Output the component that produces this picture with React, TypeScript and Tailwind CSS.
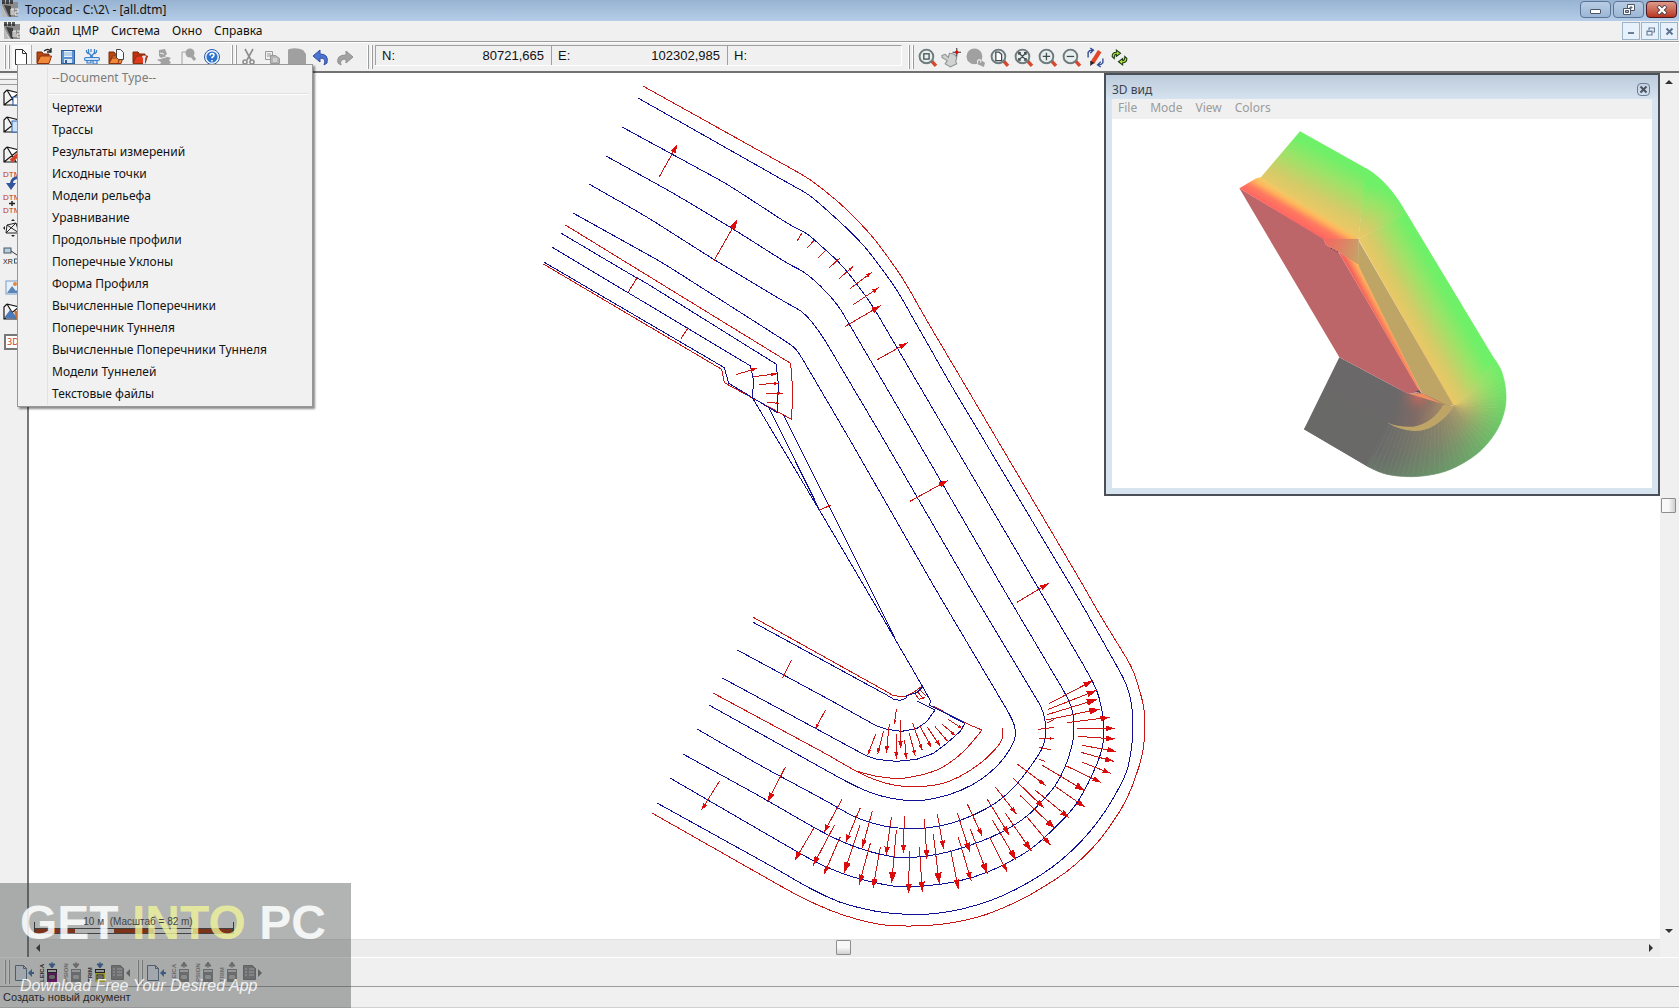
import type { ReactNode } from "react";
import clsx from "clsx";

type Arrow = [number, number, number, number, number];
type Pt = [number, number];

const RED = "#cc1616";
const BLUE = "#101096";

const MENU = ["Файл", "ЦМР", "Система", "Окно", "Справка"];

const DOC_TYPES = [
  "Чертежи",
  "Трассы",
  "Результаты измерений",
  "Исходные точки",
  "Модели рельефа",
  "Уравнивание",
  "Продольные профили",
  "Поперечные Уклоны",
  "Форма Профиля",
  "Вычисленные Поперечники",
  "Поперечник Туннеля",
  "Вычисленные Поперечники Туннеля",
  "Модели Туннелей",
  "Текстовые файлы",
];

// Contours in window coordinates
const BLUE_CONTOURS = [
  "638,98 797,188 808,194 820,204 838,220 857,238 870,253 885,273 897,290 930,348 948,380 1080,601 1118,668 1127,685 1131,700 1133,718 1133,738 1130,758 1127,772 1117,792 1105,812 1090,832 1073,850 1052,868 1028,883 1003,896 978,905 950,912 920,915 900,914 877,912 840,903 807,887 780,871 657,803",
  "622,127 727,184 793,227 807,233 820,245 837,260 850,275 865,295 875,310 930,404 1080,659 1089,675 1097,690 1101,705 1104,722 1104,740 1100,757 1093,773 1084,792 1073,809 1055,828 1033,848 1015,859 987,873 957,882 927,886 900,887 893,886 870,882 840,873 815,862 763,832 670,778",
  "606,156 673,193 730,227 790,265 803,271 820,285 838,305 848,322 917,440 1004,590 1065,693 1072,707 1074,722 1074,737 1070,753 1065,768 1055,787 1043,800 1027,817 1003,832 980,842 950,852 923,857 900,858 893,857 870,852 847,844 830,836 813,827 763,798 683,754",
  "589,184 647,217 713,259 790,305 802,311 813,323 823,337 884,440 971,590 1045,713 1046,737 1042,750 1033,763 1023,777 1007,795 987,809 960,821 937,827 915,829 893,828 870,823 850,815 830,803 763,767 697,729",
  "573,213 663,263 793,346 799,353 850,440 936,590 1013,720 1016,732 1014,743 1003,760 990,773 973,785 950,795 927,800 913,801 893,799 870,793 847,782 709,705",
];

const RED_CONTOURS = [
  "643,86 810,179 830,195 843,206 863,226 877,242 895,267 905,282 930,326 962,380 1080,580 1100,615 1132,667 1138,685 1143,702 1145,718 1145,737 1142,757 1137,773 1127,800 1113,822 1100,840 1085,856 1067,872 1045,886 1025,898 1003,908 983,916 953,923 925,926 892,926 870,923 842,915 817,905 793,893 770,880 652,813",
  "713,693 830,756 857,772 877,781 897,786 915,787 940,785 960,777 980,764 993,752 1003,740 1002,728",
  "857,771 873,776 897,779 913,777 937,771 957,758 970,745 982,730",
  "982,730 965,723 933,706",
];

// The detail groups below are digitised at three units per pixel
const NORTH = {
  red: ["106,465 782,880 788,960 785,1048 590,942 583,938 575,898 40,582"],
  blue: [
    "94,490 300,612 350,640 738,882 745,940 742,1028",
    "67,532 662,888 670,930 668,985",
    "43,577 583,893 596,940 742,1028",
  ],
  arrows: [
    [388, 320, 442, 224, 25], [552, 572, 622, 449, 30], [802, 512, 815, 490, 0], [833, 533, 852, 511, 0],
    [865, 563, 889, 539, 8], [897, 594, 929, 565, 12], [927, 626, 970, 589, 15], [960, 656, 1025, 607, 18],
    [970, 704, 1046, 653, 20], [946, 769, 1052, 707, 28], [1042, 869, 1133, 818, 26], [295, 666, 322, 622, 6],
    [452, 808, 474, 773, 8], [618, 914, 680, 895, 18], [670, 920, 742, 911, 18], [687, 943, 748, 940, 16],
    [708, 970, 758, 970, 16], [711, 997, 748, 1000, 10],
  ] as Arrow[],
};

const MIDDLE = {
  red: [],
  blue: ["38,55 238,390 400,665 545,915", "85,80 244,400 435,725 465,775", "130,105 266,376 465,775"],
  arrows: [[510, 364, 624, 301, 28], [831, 667, 926, 610, 26], [238, 390, 272, 376, 8]] as Arrow[],
};

const SOUTH = {
  red: ["370,82 770,305 790,317 825,320 850,308 878,287", "867,298 888,318", "862,305 880,326", "855,312 868,328 886,322"],
  blue: [
    "368,96 770,315 790,327 810,331 828,325 830,317 860,308 878,290",
    "322,180 600,330 740,408 770,418 815,424 860,416 890,395 915,360 860,332",
    "277,264 710,498 740,508 800,514 860,508 910,490 950,460 990,425 1005,400",
    "875,285 890,312 903,335 897,345 1005,400",
  ],
  arrows: [
    [484, 211, 458, 263, 10], [586, 361, 556, 416, 14], [466, 531, 413, 635, 28], [268, 574, 214, 661, 22],
    [637, 626, 582, 727, 24], [691, 653, 647, 758, 24], [727, 663, 697, 773, 24], [784, 682, 768, 796, 26],
    [799, 720, 785, 880, 34], [552, 714, 494, 811, 28], [613, 706, 549, 827, 28], [631, 740, 582, 853, 26],
    [690, 705, 642, 850, 34], [721, 760, 687, 884, 30], [751, 771, 729, 895, 28], [799, 358, 793, 403, 12],
    [778, 401, 769, 488, 20], [811, 391, 812, 475, 22], [760, 424, 743, 492, 18], [737, 433, 713, 495, 16],
    [799, 433, 799, 506, 20], [824, 449, 829, 508, 18], [838, 430, 856, 498, 18], [848, 400, 877, 481, 18],
    [870, 408, 904, 472, 18], [892, 411, 931, 469, 18], [915, 410, 953, 454, 14], [937, 403, 978, 438, 16],
    [955, 388, 998, 417, 14],
  ] as Arrow[],
};

const BEND = {
  red: [],
  blue: [],
  arrows: [
    [447, 341, 578, 272, 28], [445, 358, 590, 301, 30], [441, 374, 592, 328, 32], [439, 390, 600, 357, 32],
    [500, 398, 629, 382, 28], [530, 415, 645, 415, 28], [533, 439, 645, 447, 26], [546, 466, 648, 484, 26],
    [543, 487, 641, 514, 26], [547, 517, 632, 550, 24], [497, 527, 602, 577, 25], [427, 526, 556, 603, 32],
    [464, 588, 556, 652, 27], [405, 600, 508, 684, 28], [360, 616, 465, 716, 30], [382, 682, 452, 766, 26],
    [340, 565, 433, 655, 28], [351, 522, 437, 586, 22], [286, 591, 349, 672, 22], [262, 628, 328, 736, 28],
    [316, 670, 394, 783, 30], [202, 642, 247, 739, 24], [172, 669, 209, 786, 28], [277, 690, 349, 811, 32],
    [211, 717, 262, 852, 32], [268, 740, 322, 847, 26], [175, 742, 214, 874, 28], [152, 779, 175, 897, 28],
    [112, 672, 131, 778, 26], [100, 733, 118, 882, 34], [73, 687, 81, 807, 28], [58, 772, 67, 905, 30],
    [13, 678, 10, 790, 24], [28, 784, 26, 910, 28], [414, 418, 462, 412, 8], [417, 445, 462, 446, 12],
    [417, 472, 452, 479, 6], [417, 508, 435, 514, 0], [442, 398, 462, 388, 0],
  ] as Arrow[],
};

const mix = (a: number, b: number, t: number) => a + (b - a) * t;
const mixPt = (a: Pt, b: Pt, t: number): Pt => [mix(a[0], b[0], t), mix(a[1], b[1], t)];
const dist = (a: Pt, b: Pt) => Math.hypot(a[0] - b[0], a[1] - b[1]);

// Polyline with its corners rounded off, at most 14px along each leg
function roundedPath(points: string) {
  const pts = points.split(" ").map((p) => p.split(",").map(Number) as Pt);
  let d = `M${pts[0]}`;
  for (let i = 1; i < pts.length - 1; i++) {
    const [a, p, b] = [pts[i - 1], pts[i], pts[i + 1]];
    const from = mixPt(p, a, Math.min(0.5, 14 / dist(p, a)));
    const to = mixPt(p, b, Math.min(0.5, 14 / dist(p, b)));
    d += `L${from}Q${p} ${to}`;
  }
  return `${d}L${pts[pts.length - 1]}`;
}

function SlopeArrow({ a }: { a: Arrow }) {
  const [x1, y1, x2, y2, head] = a;
  const len = Math.hypot(x2 - x1, y2 - y1);
  const ux = (x2 - x1) / len;
  const uy = (y2 - y1) / len;
  const bx = x2 - ux * head;
  const by = y2 - uy * head;
  const w = head * 0.32;
  return (
    <>
      <line x1={x1} y1={y1} x2={x2} y2={y2} stroke={RED} vectorEffect="non-scaling-stroke" />
      {head > 0 && (
        <polygon points={`${x2},${y2} ${bx - uy * w},${by + ux * w} ${bx + uy * w},${by - ux * w}`} fill="#dc0c0c" />
      )}
    </>
  );
}

function Detail({ x, y, data }: { x: number; y: number; data: { red: string[]; blue: string[]; arrows: Arrow[] } }) {
  return (
    <g transform={`translate(${x} ${y}) scale(${1 / 3})`}>
      {data.red.map((p) => (
        <polyline key={p} points={p} stroke={RED} vectorEffect="non-scaling-stroke" />
      ))}
      {data.blue.map((p) => (
        <polyline key={p} points={p} stroke={BLUE} vectorEffect="non-scaling-stroke" />
      ))}
      {data.arrows.map((a) => (
        <SlopeArrow key={a.join()} a={a} />
      ))}
    </g>
  );
}

function TerrainPlan() {
  return (
    <svg className="block h-full w-full" role="img" aria-label="all.dtm">
      <g transform="translate(-29 -73)" fill="none" strokeWidth={1} shapeRendering="crispEdges">
        {BLUE_CONTOURS.map((p) => (
          <path key={p} d={roundedPath(p)} stroke={BLUE} />
        ))}
        {RED_CONTOURS.map((p) => (
          <path key={p} d={roundedPath(p)} stroke={RED} />
        ))}
        <Detail x={530} y={70} data={NORTH} />
        <Detail x={740} y={380} data={MIDDLE} />
        <Detail x={630} y={590} data={SOUTH} />
        <Detail x={900} y={590} data={BEND} />
      </g>
    </svg>
  );
}

// Bend of the outer slope: crest and toe points with the amount of shade at each
const FAN: { inner: Pt; outer: Pt; shade: number }[] = [
  { inner: [1062, 1008], outer: [1185, 869], shade: 0 },
  { inner: [1062, 1008], outer: [1205, 905], shade: 0.02 },
  { inner: [1062, 1008], outer: [1217, 960], shade: 0.1 },
  { inner: [1062, 1008], outer: [1215, 1015], shade: 0.22 },
  { inner: [1062, 1008], outer: [1194, 1075], shade: 0.36 },
  { inner: [1060, 1010], outer: [1152, 1132], shade: 0.5 },
  { inner: [1046, 1030], outer: [1100, 1173], shade: 0.62 },
  { inner: [1024, 1050], outer: [1036, 1204], shade: 0.72 },
  { inner: [986, 1072], outer: [968, 1218], shade: 0.8 },
  { inner: [945, 1082], outer: [905, 1219], shade: 0.88 },
  { inner: [900, 1075], outer: [850, 1210], shade: 0.95 },
  { inner: [862, 1058], outer: [800, 1188], shade: 1 },
];

const shaded = (rgb: number[], s: number) => `rgb(${rgb.map((c) => Math.round(mix(c, 105, s))).join(",")})`;

// Catmull-Rom through the toe points keeps the rim round
function rim(i: number, t: number): Pt {
  const at = (n: number) => FAN[Math.max(0, Math.min(FAN.length - 1, n))].outer;
  const [p0, p1, p2, p3] = [at(i - 1), at(i), at(i + 1), at(i + 2)];
  const axis = (k: 0 | 1) =>
    0.5 *
    (2 * p1[k] +
      (p2[k] - p0[k]) * t +
      (2 * p0[k] - 5 * p1[k] + 4 * p2[k] - p3[k]) * t * t +
      (3 * p1[k] - p0[k] - 3 * p2[k] + p3[k]) * t * t * t);
  return [axis(0), axis(1)];
}

const STEPS = 4;
const fanQuads = FAN.slice(0, -1).flatMap((f, i) => {
  const g = FAN[i + 1];
  return Array.from({ length: STEPS }, (_, k) => {
    const t0 = k / STEPS;
    const t1 = (k + 1) / STEPS;
    return {
      id: `fan${i}-${k}`,
      a: mixPt(f.inner, g.inner, t0),
      b: rim(i, t0),
      c: rim(i, t1),
      d: mixPt(f.inner, g.inner, t1),
      shade: mix(f.shade, g.shade, t0),
    };
  });
});

const slopeStops = (
  <>
    <stop offset="0" stopColor="#ecc766" />
    <stop offset=".25" stopColor="#d2cc68" />
    <stop offset=".6" stopColor="#9ce368" />
    <stop offset=".9" stopColor="#6ef068" />
  </>
);

function TerrainModel() {
  return (
    <svg className="block h-full w-full" role="img" aria-label="3D">
      <defs>
        <linearGradient id="slopeTop" gradientUnits="userSpaceOnUse" x1="627" y1="415" x2="719" y2="250">{slopeStops}</linearGradient>
        <linearGradient id="slopeRight" gradientUnits="userSpaceOnUse" x1="775" y1="510" x2="919" y2="427">{slopeStops}</linearGradient>
        <radialGradient id="slopeCorner" gradientUnits="userSpaceOnUse" cx="775" cy="505" r="185">{slopeStops}</radialGradient>
        {fanQuads.map((q) => (
          <linearGradient key={q.id} id={q.id} gradientUnits="userSpaceOnUse" x1={q.a[0]} y1={q.a[1]} x2={q.b[0]} y2={q.b[1]}>
            <stop offset="0" stopColor={shaded([236, 199, 102], q.shade)} />
            <stop offset=".3" stopColor={shaded([200, 205, 104], q.shade)} />
            <stop offset=".65" stopColor={shaded([146, 228, 104], q.shade)} />
            <stop offset="1" stopColor={shaded([108, 240, 104], q.shade * 0.93)} />
          </linearGradient>
        ))}
        <linearGradient id="edge" gradientUnits="userSpaceOnUse" x1="418" y1="355" x2="447" y2="306">
          <stop offset="0" stopColor="#ff6662" />
          <stop offset=".4" stopColor="#ff7a60" />
          <stop offset=".75" stopColor="#ffb45c" />
          <stop offset="1" stopColor="#f2c864" />
        </linearGradient>
        <linearGradient id="notch" gradientUnits="userSpaceOnUse" x1="672" y1="510" x2="776" y2="540">
          <stop offset="0" stopColor="#f46862" />
          <stop offset=".5" stopColor="#e08064" />
          <stop offset="1" stopColor="#c8a066" />
        </linearGradient>
        <linearGradient id="sliver" gradientUnits="userSpaceOnUse" x1="824" y1="732" x2="852" y2="717">
          <stop offset="0" stopColor="#f4665c" />
          <stop offset=".6" stopColor="#ffa85c" />
          <stop offset="1" stopColor="#ffc860" />
        </linearGradient>
        <linearGradient id="bowl" gradientUnits="userSpaceOnUse" x1="880" y1="1000" x2="1035" y2="1020">
          <stop offset="0" stopColor="#6a6868" />
          <stop offset=".45" stopColor="#7e6a66" />
          <stop offset="1" stopColor="#a88c66" />
        </linearGradient>
        <radialGradient id="ember" gradientUnits="userSpaceOnUse" cx="955" cy="978" r="60">
          <stop offset="0" stopColor="#d8685e" stopOpacity=".8" />
          <stop offset="1" stopColor="#806860" stopOpacity="0" />
        </radialGradient>
      </defs>
      <g transform="translate(-12 -49) scale(.333333)">
        <polygon points="480,325 600,184 790,290 800,296 775,510" fill="url(#slopeTop)" />
        <path d="M775 508L798 294Q868 335 921 432Z" fill="url(#slopeCorner)" />
        <polygon points="775,508 920,430 1185,869 1186,872 1062,1010" fill="url(#slopeRight)" />
        {fanQuads.map((q) => (
          <polygon key={q.id} points={[q.a, q.b, q.c, q.d].join(" ")} fill={`url(#${q.id})`} stroke={`url(#${q.id})`} strokeWidth="2" />
        ))}
        <path d="M718 862L612 1078L800 1188L864 1058L925 972Z" fill="#6a6868" />
        <path d="M680 965L612 1078L800 1188L862 1058Z" fill="#696a67" />
        <path d="M860 940L862 1058Q900 1076 945 1080Q1010 1075 1060 1010L965 968L925 972Z" fill="url(#bowl)" />
        <path d="M860 940L862 1058Q900 1076 945 1080Q1010 1075 1060 1010L965 968L925 972Z" fill="url(#ember)" />
        <polygon points="418,355 670,505 678,524 715,545 960,965 925,972 718,862" fill="#bd6669" />
        <polygon points="418,355 466,326 480,322 775,506 775,508 670,507" fill="url(#edge)" />
        <polygon points="670,506 776,507 777,588 715,545 678,524" fill="url(#notch)" />
        <polygon points="715,545 777,585 966,970 955,958" fill="url(#sliver)" />
        <polygon points="775,510 1062,1008 1035,1003 965,968 777,590" fill="#bea566" />
        <polygon points="930,972 966,970 1030,1003" fill="#f09060" />
        <polygon points="945,966 957,960 964,970" fill="#565060" />
        <path d="M862 1058Q895 1072 940 1070Q1000 1058 1030 1004L1062 1008Q1010 1085 940 1083Q895 1078 862 1058Z" fill="#bea566" />
        <path d="M692 534l22 12" stroke="#803030" strokeWidth="3" strokeDasharray="6 4" />
      </g>
    </svg>
  );
}

function Icon({ children, size = "h-[18px] w-[18px]" }: { children: ReactNode; size?: string }) {
  return (
    <svg viewBox="0 0 18 18" className={clsx("shrink-0 overflow-visible", size)} fill="none" aria-hidden="true">
      {children}
    </svg>
  );
}

function ToolButton({ label, children, disabled }: { label: string; children: ReactNode; disabled?: boolean }) {
  return (
    <button type="button" aria-label={label} disabled={disabled} className="flex h-6 w-6 shrink-0 items-center justify-center">
      {children}
    </button>
  );
}

function Grip() {
  return (
    <span className="flex h-6 shrink-0 gap-[2px]">
      <span className="w-[2px] border-r border-[#9c9c9c] bg-white" />
      <span className="w-[2px] border-r border-[#9c9c9c] bg-white" />
    </span>
  );
}

const Folder = ({ red }: { red?: boolean }) => (
  <>
    <path d="M2 15V4h5l1.500 2H14v3" fill={red ? "#c03010" : "#b84812"} stroke="#7c2808" />
    <path d="M2 15.500L5.500 8H16.500L14 15.500Z" fill={red ? "#e23a1c" : "#f08a38"} stroke="#8c3010" />
  </>
);

const fileTools: { label: string; icon: ReactNode; disabled?: boolean }[] = [
  { label: "Открыть", icon: <><Folder /><path d="M9 3q4-3 6.500 0M16 0v4h-4" stroke="#222" strokeWidth="1.300" /></> },
  {
    label: "Сохранить",
    icon: (
      <>
        <rect x="2.500" y="2.500" width="13" height="13" fill="#5d92cf" stroke="#2d5f9d" />
        <rect x="5" y="3" width="8" height="6" fill="#e6f2fc" />
        <path d="M5 5h8M5 7h8" stroke="#8db4dc" />
        <rect x="5" y="11" width="8" height="4" fill="#dbe7f2" />
        <rect x="6" y="12" width="2" height="3" fill="#2d5f9d" />
      </>
    ),
  },
  {
    label: "Инструменты",
    icon: (
      <g stroke="#3c7fca" strokeWidth="1.200" fill="#cfe3f8">
        <path d="M5.500 1v4l5 5M11.500 1v4l-5 5M3.500 2v2l2 2M8 1v3M13.500 2v2l-2 2" />
        <rect x="1.500" y="9.500" width="15" height="3" rx="1.500" />
        <path d="M4 13v2h4v-2M10 13v3h4v-3" />
      </g>
    ),
  },
  { label: "Открыть документ", icon: <><Folder /><path d="M9.500 1.500h4l3 3v7h-7Z" fill="#f7fafc" stroke="#444" /><path d="M2 15.500L5 10h5l2 2-1 3.500Z" fill="#f08a38" stroke="#8c3010" /></> },
  { label: "Настройка папки", icon: <><Folder red /><path d="M13 9v7M11.500 8l1.500 1.500L14.500 8" stroke="#dfe6ee" strokeWidth="2" /></> },
  {
    label: "Печать",
    disabled: true,
    icon: <g fill="#a2a2a2"><path d="M4 2l6-1 2 5-2 2 6 2-2 2 2 3-4 2H5l1-3-4-2 4-2-2-2Z" /><path d="M4 11l10-3M5 5l4 1" stroke="#f0f0f0" /></g>,
  },
  {
    label: "Просмотр",
    disabled: true,
    icon: <><path d="M3 17V4h6" stroke="#a2a2a2" /><circle cx="11" cy="5" r="4.500" fill="#a2a2a2" /><path d="M13 8l3 4" stroke="#a2a2a2" strokeWidth="3" /></>,
  },
  {
    label: "Помощь",
    icon: (
      <>
        <circle cx="9" cy="9" r="7.500" fill="#eaf3fd" stroke="#2a5ba8" />
        <circle cx="9" cy="9" r="5.500" fill="#2d72c8" />
        <path d="M7 7.500q0-2 2-2t2 1.700q0 1-2 2.300v.8M9 12v1.400" stroke="#fff" strokeWidth="1.500" />
      </>
    ),
  },
];

const editTools: { label: string; icon: ReactNode; disabled?: boolean }[] = [
  { label: "Вырезать", disabled: true, icon: <g stroke="#8e8e8e" strokeWidth="1.600"><path d="M5 1l6 11M13 1L7 12" /><circle cx="5" cy="14" r="2" /><circle cx="12" cy="14" r="2" /></g> },
  { label: "Копировать", disabled: true, icon: <g stroke="#9a9a9a"><path d="M1.500 3.500h7v8h-7zM3 6h4M3 8h4" /><path d="M6.500 7.500h5l4 3v5h-9z" fill="#b4b4b4" /><path d="M9 11h4M9 13h4" stroke="#eee" /></g> },
  { label: "Вставить", disabled: true, icon: <path d="M1 1q8-2 14 1l3 4v12H0V2Z" fill="#a0a0a0" /> },
  { label: "Отменить", icon: <path d="M8 2v4q9 0 7 9l-3 2q3-7-4-7v4L1 8Z" fill="#4e74d2" stroke="#2f4ea4" /> },
  { label: "Повторить", disabled: true, icon: <path d="M10 3v4q-10 0-8 8l3 2q-2-6 5-6v4l7-6Z" fill="#a2a2a2" stroke="#8f8f8f" /> },
];

function Lens({ children }: { children?: ReactNode }) {
  return (
    <>
      <path d="M13 12.500l4 4.500" stroke="#d4482c" strokeWidth="3.200" />
      <circle cx="8" cy="8" r="6.500" fill="#e6efee" stroke="#6f7a7c" strokeWidth="1.800" />
      <g stroke="#434b4e" strokeWidth="1.200">{children}</g>
    </>
  );
}

const viewTools: { label: string; icon: ReactNode; disabled?: boolean }[] = [
  { label: "Окно увеличения", icon: <Lens><rect x="5.500" y="5.500" width="5" height="5" /></Lens> },
  { label: "Панорама", icon: <><path d="M0 7l3-1 3 3 1-4 5 1 2 3-1 4 1 2-6 3-5-3 2-3-5-3Z" fill="#cfd2d1" stroke="#8c9290" /><path d="M14 0v8M10 4h8" stroke="#333" /><path d="M12.500 4h3M14 2.500v3" stroke="#e00" strokeWidth="2" /></> },
  { label: "Предыдущий вид", disabled: true, icon: <><circle cx="8" cy="8" r="7.500" fill="#a0a0a0" /><path d="M12 10l6 4-1 4-7-3Z" fill="#a0a0a0" /><path d="M11 15v-3q2-2 3 0v2" stroke="#eee" /></> },
  { label: "Лист", icon: <Lens><path d="M5.500 4h3l2.500 2v6h-5.500z" fill="#fff" /></Lens> },
  { label: "Показать всё", icon: <Lens><path d="M4.500 6.500v-2h2M9.500 4.500h2v2M11.500 9.500v2h-2M6.500 11.500h-2v-2M5 5l6 6M11 5l-6 6" /></Lens> },
  { label: "Увеличить", icon: <Lens><path d="M4.500 8h7M8 4.500v7" /></Lens> },
  { label: "Уменьшить", icon: <Lens><path d="M4.500 8h7" /></Lens> },
  { label: "Перерисовать", icon: <><path d="M6 14L13 3" stroke="#e0482a" strokeWidth="4" /><path d="M4 17l0-5 4 2Z" fill="#222" /><path d="M2 9V4q1-2 4-2M4 0l3 2-3 3M16 10v4q-1 2-4 2M14 13l-3 3 3 2" stroke="#2e4b94" strokeWidth="1.300" /></> },
  { label: "Обновить", icon: <g stroke="#1a3a12"><path d="M4 10L2 8q0-4 4-4V2l4 3-4 3V6q-2 0-2 4Z" fill="#a6dc3c" /><path d="M14 8l2 2q0 4-4 4v2l-4-3 4-3v2q2 0 2-4Z" fill="#c6e83c" /></g> },
];

const mesh = <path d="M4 1l-3 3v12h12M1 16L16 4M4 1l12 3v12H1M4 1l9 15" stroke="#151515" strokeWidth="1.200" fill="#fff" />;
const tiny = { fontFamily: "Liberation Sans", fontSize: 8 };

const sideTools: { label: string; icon: ReactNode; box: string }[] = [
  { label: "Создать ЦМР", box: "h-[25px]", icon: <>{mesh}<rect x="10" y="8" width="8" height="8" fill="#fff" stroke="#1d55a8" /></> },
  { label: "Открыть ЦМР", box: "h-[29px]", icon: <>{mesh}<rect x="9" y="5" width="9" height="11" fill="#cfe2f6" stroke="#2d66b6" /></> },
  { label: "Редактировать", box: "h-[31px]", icon: <>{mesh}<path d="M8 15L17 7" stroke="#d4442a" strokeWidth="4" /></> },
  { label: "Загрузить DTM", box: "h-[21px]", icon: <><text x="0" y="5" fill="#b83018" style={tiny}>DTM</text><path d="M16 4q-8 0-9 7H3l5 7 5-7h-3q0-4 6-4Z" fill="#33559c" /></> },
  { label: "Сложить DTM", box: "h-[25px]", icon: <><text x="0" y="5" fill="#b83018" style={tiny}>DTM</text><path d="M9 6v5M6 8.500h6" stroke="#222" strokeWidth="1.500" /><text x="0" y="18" fill="#b83018" style={tiny}>DTM</text></> },
  { label: "Переместить", box: "h-[23px]", icon: <><path d="M4 6l9-2 3 10-13 0ZM4 6l12 8M13 4L3 14" stroke="#222" /><path d="M8 2l2-2 2 2ZM8 16l2 2 2-2ZM2 7L0 9l2 2Z" fill="#222" /></> },
  { label: "Ссылки", box: "h-[33px]", icon: <><rect x="1" y="1" width="7" height="5" fill="#b9cfdb" stroke="#456" /><path d="M8 4l6 4" stroke="#333" /><text x="0" y="17" fill="#222" style={{ fontFamily: "Liberation Sans", fontSize: 7 }}>XR</text><rect x="11.500" y="12" width="5" height="4" stroke="#456" /></> },
  { label: "Изображение", box: "h-[30px]", icon: <><rect x="3" y="3" width="14" height="13" fill="#e8f1fb" stroke="#7b9cc4" /><path d="M4 15l5-7 4 5 2-2 2 4Z" fill="#5c86b8" /><circle cx="12" cy="6" r="2" fill="#e08a3c" /></> },
  { label: "Модель", box: "h-5", icon: <>{mesh}<path d="M1 15l6-8 9 9Z" fill="#4a78b8" /><path d="M11 8h6v8h-4Z" fill="#c2703c" /></> },
];

function Device({ name, body, ink, up }: { name: string; body: string; ink: string; up?: boolean }) {
  const arrow = ink === "#858687" ? ink : "#3666a8";
  return (
    <svg viewBox="0 0 20 20" className="h-5 w-5 overflow-visible" fill="none" aria-hidden="true">
      <text x="0" y="0" transform="translate(6 20) rotate(-90)" fill={ink} style={{ fontFamily: "Liberation Sans", fontSize: 6, fontWeight: 700 }}>
        {name}
      </text>
      <path d={up ? "M14 6V3M11 4l3-4 3 4Z" : "M14 0v3M11 2l3 4 3-4Z"} fill={arrow} stroke={arrow} />
      <rect x="9.500" y="7.500" width="9" height="3" fill="#cfcfcf" stroke={ink} />
      <rect x="9" y="11" width="10" height="9" fill={body} />
      <rect x="11" y="13" width="6" height="4" fill="#eee" stroke={ink} />
      <path d="M12 15h4" stroke={ink} />
    </svg>
  );
}

function DocArrow() {
  return (
    <svg viewBox="0 0 20 20" className="h-5 w-5" fill="none" aria-hidden="true">
      <path d="M1.500 3.500h8l3 3v12h-11Z" fill="#e3ecf4" stroke="#5d7086" />
      <path d="M9.500 3.500v3h3" stroke="#5d7086" />
      <path d="M14 11l4-4v3h2v2h-2v3Z" fill="#3d6fae" />
    </svg>
  );
}

function ListArrow({ right }: { right?: boolean }) {
  return (
    <svg viewBox="0 0 20 20" className="h-5 w-5" fill="none" aria-hidden="true">
      <path d="M1.500 3.500h9l3 3v11h-12Z" fill="#8a8b8c" stroke="#76777a" />
      <path d="M3 7h2M7 7h5M3 10h2M7 10h5M3 13h2M7 13h5" stroke="#d8d8d8" />
      <path d={right ? "M16 7l4 4-4 4Z" : "M20 7l-4 4 4 4Z"} fill="#76777a" />
    </svg>
  );
}

function DocumentTypeMenu() {
  return (
    <div
      role="menu"
      className="absolute top-[19px] left-[5px] z-30 w-[296px] border border-[#979797] bg-[#f1f1f1] pt-[2px] pb-px text-[12px] shadow-[2px_2px_2px_rgba(0,0,0,0.45)]"
    >
      <div className="ml-[29px] border-l border-[#e2e2e2]">
        <div className="flex h-[22px] items-center pl-1 text-[#7b7b7b]">--Document Type--</div>
        <div className="mt-1 mr-1 mb-[2px] border-t border-[#e0e0e0] bg-white pt-px" />
        {DOC_TYPES.map((t) => (
          <button key={t} type="button" role="menuitem" className="flex h-[22px] w-full items-center pl-1 text-left">
            {t}
          </button>
        ))}
      </div>
    </div>
  );
}

function View3D() {
  return (
    <section className="absolute top-0 right-0 flex h-[423px] w-[556px] flex-col border-2 border-[#4a4f58] bg-[#d7e3ef] px-[6px] pb-[6px]">
      <header className="-mx-[6px] flex h-6 items-end justify-between bg-gradient-to-b from-[#bccbdb] to-[#d5e2ef] px-[6px] text-[12px] text-[#3d444c]">
        <h2>3D вид</h2>
        <button type="button" aria-label="Закрыть 3D вид" className="mr-[2px] mb-[3px] flex h-[13px] w-[13px] items-center justify-center rounded-sm border border-[#6b7b94]">
          <svg viewBox="0 0 9 9" className="h-[9px] w-[9px]" aria-hidden="true"><path d="M1.500 1.500l6 6M7.500 1.500l-6 6" stroke="#4a5260" strokeWidth="2" /></svg>
        </button>
      </header>
      <nav className="flex h-5 shrink-0 items-center gap-[13px] bg-[#f0f0f0] px-[6px] pb-[2px] text-[12px] text-[#9b9b9b]">
        <button type="button">File</button>
        <button type="button">Mode</button>
        <button type="button">View</button>
        <button type="button">Colors</button>
      </nav>
      <div className="min-h-0 flex-1 bg-white">
        <TerrainModel />
      </div>
    </section>
  );
}

function ScaleBar() {
  return (
    <div className="absolute bottom-[5px] left-[5px] w-[200px] font-['Liberation_Sans',Arial,sans-serif]">
      <div className="relative z-50 pl-2 text-center text-[10px] leading-[11px] whitespace-pre text-[#444]">10 м  (Масштаб = 82 m)</div>
      <div className="-mt-[5px] flex h-3 items-end border-x border-[#333]">
        <div className="flex h-[6px] w-full border border-[#444]">
          <span className="flex-1 bg-[#a52a00]" />
          <span className="flex-1 bg-white" />
          <span className="flex-1 bg-[#a52a00]" />
          <span className="flex-1 bg-white" />
          <span className="flex-1 bg-[#a52a00]" />
        </div>
      </div>
    </div>
  );
}

function Readout({ id, name, value, wide }: { id: string; name: string; value: string; wide?: boolean }) {
  return (
    <div className={clsx("flex h-5 items-center justify-between border-t border-l border-[#a0a0a0] pr-[7px] pl-[6px]", wide ? "w-[175px] border-r border-r-white" : "w-[176px]")}>
      <label htmlFor={id}>{name}</label>
      <output id={id}>{value}</output>
    </div>
  );
}

function Logo() {
  return (
    <svg viewBox="0 0 18 18" className="h-[18px] w-[18px] shrink-0" aria-hidden="true">
      <path d="M1 2h16v15H7L1 6Z" fill="#8c8c8c" />
      <path d="M3 5l5 11 2 1V6Z" fill="#3e3e3e" />
      <path d="M1 1h12M1 3h12" stroke="#222" strokeWidth="1.500" strokeDasharray="3 1" />
      <path d="M10 9v6M12 9v6M10 9h3M14 9h3v3h-3v3h3" stroke="#f2f2f2" fill="none" />
      <path d="M1 5l5 12H1Z" fill="#b9b9b9" />
    </svg>
  );
}

const frameButton = "flex h-[17px] w-[31px] items-center justify-center rounded-sm border border-[#5c7596] bg-gradient-to-b from-[#b9cde4] to-[#9cb7d6]";
const mdiButton = "flex h-[18px] w-[18px] items-center justify-center border border-[#9cb4c8] bg-[#e6f1fb]";

export default function App() {
  return (
    <div className="flex h-screen flex-col overflow-hidden bg-[#f0f0f0] font-['Noto_Sans','Open_Sans',sans-serif] text-[12px] text-[#111]">
      <header className="flex h-[21px] shrink-0 items-start bg-gradient-to-b from-[#97b3d1] to-[#b5cde8] pr-[2px] pl-px">
        <Logo />
        <h1 className="ml-[6px] flex-1 leading-5 text-[12px]">Topocad - C:\2\ - [all.dtm]</h1>
        <div className="mt-px flex gap-[2px]">
          <button type="button" aria-label="Свернуть" className={frameButton}>
            <span className="mt-1 h-[5px] w-[11px] rounded-[1px] border border-[#4c5666] bg-white" />
          </button>
          <button type="button" aria-label="Восстановить" className={frameButton}>
            <svg viewBox="0 0 12 11" className="h-[11px] w-3" aria-hidden="true">
              <path d="M4.500.500h7v6h-7zM7 3h2v1H7z" fill="#fff" stroke="#4c5666" />
              <path d="M.500 4.500h7v6h-7z" fill="#fff" stroke="#4c5666" /><path d="M2.500 6.500h3v2h-3z" fill="#9cb7d6" stroke="#4c5666" />
            </svg>
          </button>
          <button type="button" aria-label="Закрыть" className="flex h-[17px] w-[31px] items-center justify-center rounded-sm border border-[#4a1820] bg-gradient-to-b from-[#dc9a8c] to-[#b8341c]">
            <svg viewBox="0 0 12 10" className="h-[10px] w-3" aria-hidden="true">
              <path d="M2 1l8 8M10 1L2 9" stroke="#4c4048" strokeWidth="4" /><path d="M2.500 1.500l7 7M9.500 1.500l-7 7" stroke="#fff" strokeWidth="2.400" />
            </svg>
          </button>
        </div>
      </header>

      <nav className="flex h-[21px] shrink-0 items-center border-b border-[#9c9c9c] pr-px pl-[3px]">
        <Logo />
        <div className="ml-2 flex flex-1 gap-3">
          {MENU.map((m) => (
            <button key={m} type="button">{m}</button>
          ))}
        </div>
        <div className="flex gap-px">
          <button type="button" aria-label="Свернуть документ" className={mdiButton}>
            <span className="mt-1 h-[2px] w-[6px] bg-[#6a7f98]" />
          </button>
          <button type="button" aria-label="Восстановить документ" className={mdiButton}>
            <svg viewBox="0 0 9 9" className="h-[9px] w-[9px]" fill="none" aria-hidden="true"><path d="M3 3V1h5.500v4H7M1 4h5v4H1zM1 4.500h5" stroke="#6a7f98" strokeWidth="1.200" /></svg>
          </button>
          <button type="button" aria-label="Закрыть документ" className={mdiButton}>
            <svg viewBox="0 0 9 9" className="h-[9px] w-[9px]" aria-hidden="true"><path d="M1.500 1.500l6 6M7.500 1.500l-6 6" stroke="#5f7490" strokeWidth="2" /></svg>
          </button>
        </div>
      </nav>

      <div className="flex h-[31px] shrink-0 items-center border-t border-b-2 border-t-white border-b-[#717171] pl-1">
        <Grip />
        <div className="relative ml-[2px] flex">
          <button type="button" aria-label="Создать" aria-haspopup="menu" className="flex h-6 w-5 items-center justify-center border-r border-[#b0b0b0] bg-[#f9f9f9]">
            <Icon><path d="M2.500 1.500h7l4 4v11h-11Z" fill="#fff" stroke="#333" /><path d="M9.500 1.500v4h4" stroke="#333" /></Icon>
          </button>
          <DocumentTypeMenu />
        </div>
        <div className="flex">
          {fileTools.map((t) => (
            <ToolButton key={t.label} label={t.label} disabled={t.disabled}><Icon>{t.icon}</Icon></ToolButton>
          ))}
        </div>
        <div className="ml-[7px]"><Grip /></div>
        <div className="flex">
          {editTools.map((t) => (
            <ToolButton key={t.label} label={t.label} disabled={t.disabled}><Icon>{t.icon}</Icon></ToolButton>
          ))}
        </div>
        <div className="mr-[2px] ml-[10px]"><Grip /></div>
        <div className="mt-[2px] flex self-start border-b border-white font-['Liberation_Sans',Arial,sans-serif] text-[13px]">
          <Readout id="n" name="N:" value="80721,665" />
          <Readout id="e" name="E:" value="102302,985" />
          <Readout id="h" name="H:" value="" wide />
        </div>
        <div className="ml-[6px]"><Grip /></div>
        <div className="ml-px flex">
          {viewTools.map((t) => (
            <ToolButton key={t.label} label={t.label} disabled={t.disabled}>
              <Icon size="h-[19px] w-[19px]">{t.icon}</Icon>
            </ToolButton>
          ))}
        </div>
      </div>

      <div className="flex min-h-0 flex-1">
        <aside className="w-[29px] shrink-0 border-r-2 border-[#777] pt-[3px]">
          <div className="mb-px h-1 border-y border-t-white border-b-[#9c9c9c]" />
          <div className="h-1 border-b border-[#9c9c9c]" />
          {sideTools.map((t) => (
            <button key={t.label} type="button" aria-label={t.label} className={clsx("flex w-full items-center pl-[3px]", t.box)}>
              <Icon>{t.icon}</Icon>
            </button>
          ))}
          <button type="button" aria-label="3D вид" className="mt-3 ml-1 flex h-4 w-5 items-center border-2 border-[#777] bg-white pl-px text-[9px] leading-3 text-[#c83820]">3D</button>
        </aside>
        <div className="flex min-w-0 flex-1 flex-col">
          <div className="relative min-h-0 flex-1 overflow-hidden bg-white">
            <TerrainPlan />
            <View3D />
            <ScaleBar />
          </div>
          <div className="flex h-[18px] shrink-0 items-center justify-between border-t border-[#e2e2e2] bg-[#ececec] px-[5px] pb-[2px]">
            <svg viewBox="0 0 8 8" className="h-2 w-2 shrink-0" aria-hidden="true"><path d="M6 0v8L2 4Z" fill="#333" /></svg>
            <div className="flex w-full pl-[49%]">
              <span className="h-[15px] w-[15px] rounded-[1px] border border-[#8d8d8d] bg-gradient-to-b from-[#f8f8f8] from-50% to-[#cfcfcf]" />
            </div>
            <svg viewBox="0 0 8 8" className="h-2 w-2 shrink-0" aria-hidden="true"><path d="M2 0v8l4-4Z" fill="#333" /></svg>
          </div>
        </div>
        <div className="flex w-[19px] shrink-0 flex-col items-center bg-[#f0f0f0] pt-[5px] pr-[2px] pb-[22px]">
          <svg viewBox="0 0 8 8" className="h-2 w-2 shrink-0" aria-hidden="true"><path d="M0 6h8L4 2Z" fill="#333" /></svg>
          <div className="flex-1 pt-[412px]">
            <span className="block h-[15px] w-[15px] rounded-[1px] border border-[#8d8d8d] bg-gradient-to-r from-[#f8f8f8] from-50% to-[#cfcfcf]" />
          </div>
          <svg viewBox="0 0 8 8" className="h-2 w-2 shrink-0" aria-hidden="true"><path d="M0 2h8L4 6Z" fill="#333" /></svg>
        </div>
      </div>

      <div className="flex h-[30px] shrink-0 items-center border-t border-b border-t-white border-b-[#9c9c9c] pl-1">
        <Grip />
        <div className="ml-1 flex gap-1">
          <button type="button" aria-label="Импорт"><DocArrow /></button>
          <button type="button" aria-label="Импорт Leica"><Device name="LEICA" body="#780078" ink="#111" /></button>
          <button type="button" aria-label="Импорт Psion" disabled><Device name="PSION" body="#858687" ink="#858687" /></button>
          <button type="button" aria-label="Импорт Trimble"><Device name="TRIM" body="#d8cc20" ink="#111" /></button>
          <button type="button" aria-label="Импорт списка" disabled><ListArrow /></button>
        </div>
        <div className="ml-[7px]"><Grip /></div>
        <div className="ml-[3px] flex gap-1">
          <button type="button" aria-label="Экспорт"><DocArrow /></button>
          <button type="button" aria-label="Экспорт Leica" disabled><Device name="LEICA" body="#858687" ink="#858687" up /></button>
          <button type="button" aria-label="Экспорт Psion" disabled><Device name="PSION" body="#858687" ink="#858687" up /></button>
          <button type="button" aria-label="Экспорт Trimble" disabled><Device name="TRIM" body="#858687" ink="#858687" up /></button>
          <button type="button" aria-label="Экспорт списка" disabled><ListArrow right /></button>
        </div>
      </div>

      <footer className="flex h-[21px] shrink-0 items-center border-b border-[#d0d0d0] pl-[3px] font-['Liberation_Sans',Arial,sans-serif] text-[11px]">
        Создать новый документ
      </footer>

      <div className="pointer-events-none absolute bottom-0 left-0 z-40 flex h-[125px] w-[351px] flex-col bg-[#3e4042]/40 pt-[13px] pl-5 font-['Liberation_Sans',Arial,sans-serif] whitespace-nowrap">
        <p className="text-[48px] leading-[54px] font-bold text-white/85">
          GET <span className="text-[#f0f59a]/80">INTO</span> PC
        </p>
        <p className="mt-6 text-[16px] leading-6 text-white/85 italic">Download Free Your Desired App</p>
      </div>
    </div>
  );
}
